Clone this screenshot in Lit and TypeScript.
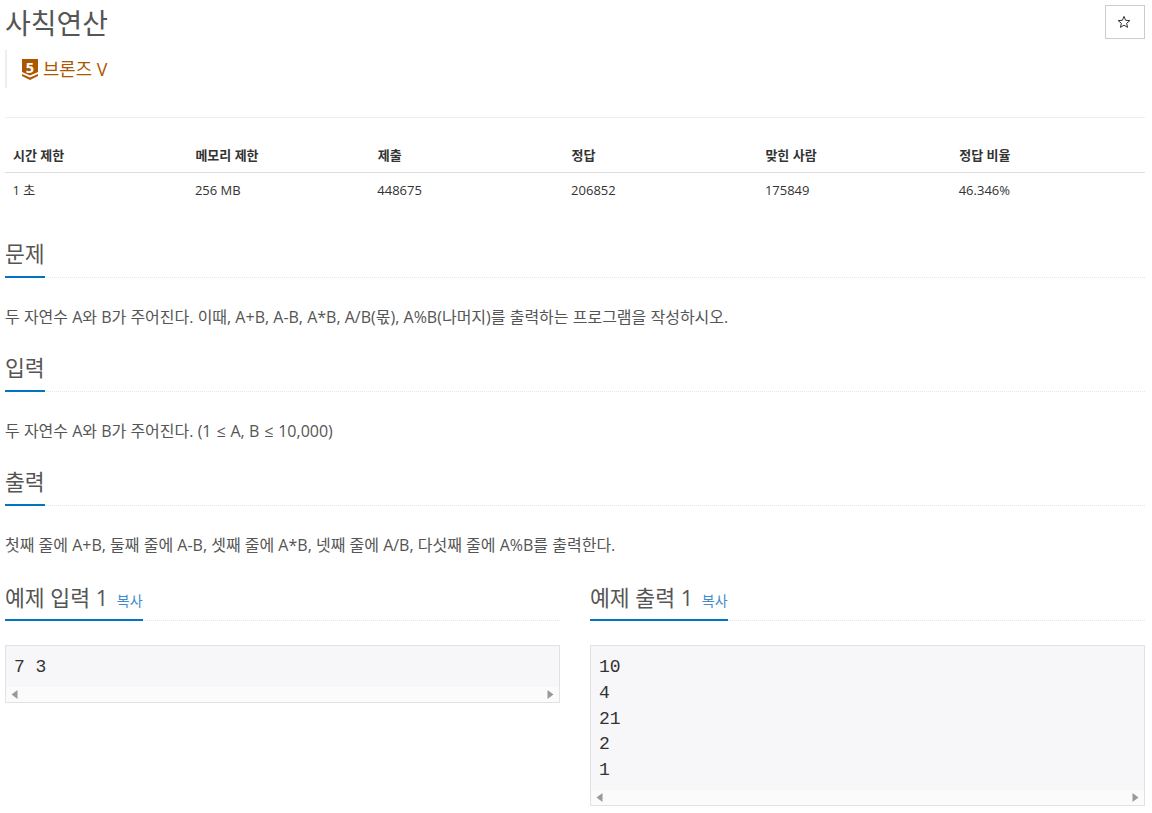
import { LitElement, html, css } from "lit";
import { customElement } from "lit/decorators.js";

const SANS = css`"Open Sans", "Noto Sans CJK KR", sans-serif`;

@customElement("app-root")
export class AppRoot extends LitElement {
  static styles = css`
    :host { display: block; height: 813px; overflow: hidden; background: #fff; color: #555; font-family: ${SANS}; font-size: 16px; line-height: 22.86px; box-sizing: border-box; padding: 0 7px 0 5px; }
    * { box-sizing: border-box; }
    .title-row { display: flex; justify-content: space-between; align-items: flex-start; height: 50px; }
    h1 { margin: 5px 0 0; font-size: 28px; line-height: 36px; font-weight: 400; color: #555; }
    .star { width: 40px; height: 34px; margin-top: 5px; border: 1px solid #ccc; background: #fff; display: flex; align-items: center; justify-content: center; padding-right: 2px; }
    .star svg { display: block; }
    .tier { height: 38px; border-left: 2px solid #eee; padding-left: 15px; display: flex; align-items: center; gap: 5px; color: #ad5600; font-size: 17.8px; line-height: 25px; }
    .badge { position: relative; width: 16px; height: 21px; }
    .badge svg { display: block; }
    .badge span { position: absolute; top: 0; left: 0; width: 16px; text-align: center; font-size: 14.5px; line-height: 17px; font-weight: 700; color: #fff; }
    .hr { height: 1px; background: #eee; margin-top: 29px; }
    .stats { display: grid; grid-template-columns: 182.4px 182.4px 193.8px 193.8px 193.8px 193.8px; margin-top: 19px; font-size: 13px; }
    .stats > div { padding: 0 8px; }
    .th { height: 36px; line-height: 37px; font-weight: 700; color: #333; border-bottom: 1px solid #ddd; }
    .stats > .td { height: 36px; line-height: 34px; color: #333; padding-left: 7.5px; }
    .headline { height: 40px; border-bottom: 1px dotted #e6e6e6; }
    .headline h2 { display: inline-block; height: 40px; margin: 0; font-size: 21.6px; line-height: 32px; font-weight: 400; color: #555; border-bottom: 2px solid #0076c0; }
    .samples .headline h2 { line-height: 33px; }
    .copy { font-size: 14px; color: #428bca; margin-left: 3.2px; }
    p { margin: 27.6px 0 0; font-size: 16px; line-height: 22.86px; color: #555; }
    .sym { margin: 0 0.75px; }
    .sec.first { margin-top: 29px; }
    .sec.next { margin-top: 23.5px; }
    .samples { display: grid; grid-template-columns: 555px 555px; column-gap: 30px; margin-top: 24.6px; align-items: start; }
    .pre { margin-top: 24px; border: 1px solid #e2e2e6; background: #f7f7f9; font-family: "Liberation Mono", monospace; font-size: 18px; line-height: 25.7px; color: #333; }
    .pre .code { padding: 9.2px 8px 6.2px; white-space: pre; }
    .bar { height: 15px; background: #fbfbfb; display: flex; justify-content: space-between; align-items: center; padding: 0 5px; }
    .bar svg { display: block; }
  `;

  private bar() {
    return html`<div class="bar">
      <svg width="7" height="9" viewBox="0 0 7 9"><path d="M6.5 0 0.5 4.5 6.5 9z" fill="#9a9a9a"/></svg>
      <svg width="7" height="9" viewBox="0 0 7 9"><path d="M0.5 0 6.5 4.5 0.5 9z" fill="#9a9a9a"/></svg>
    </div>`;
  }

  render() {
    return html`
      <div class="title-row">
        <h1>사칙연산</h1>
        <div class="star"><svg width="14" height="14" viewBox="0 0 14 14"><path d="M7 1.4 8.6 5.3 12.8 5.6 9.6 8.3 10.6 12.4 7 10.2 3.4 12.4 4.4 8.3 1.2 5.6 5.4 5.3z" fill="none" stroke="#333" stroke-width="1"/></svg></div>
      </div>
      <div class="tier">
        <div class="badge">
          <svg width="16" height="21" viewBox="0 0 16 21"><path d="M0 0H16V13L8 16.5 0 13z" fill="#ad5600"/><path d="M0 15 8 18.5 16 15V17L8 21 0 17z" fill="#ad5600"/></svg>
          <span>5</span>
        </div>
        <span>브론즈 V</span>
      </div>
      <div class="hr"></div>
      <div class="stats">
        <div class="th">시간 제한</div><div class="th">메모리 제한</div><div class="th">제출</div><div class="th">정답</div><div class="th">맞힌 사람</div><div class="th">정답 비율</div>
        <div class="td">1 초</div><div class="td">256 MB</div><div class="td">448675</div><div class="td">206852</div><div class="td">175849</div><div class="td">46.346%</div>
      </div>
      <div class="sec first"><div class="headline"><h2>문제</h2></div>
        <p>두 자연수 A와 B가 주어진다. 이때, A+B, A-B, A*B, A/B(몫), A%B(나머지)를 출력하는 프로그램을 작성하시오.</p></div>
      <div class="sec next"><div class="headline"><h2>입력</h2></div>
        <p>두 자연수 A와 B가 주어진다. (1 <span class="sym">≤</span> A, B <span class="sym">≤</span> 10,000)</p></div>
      <div class="sec next"><div class="headline"><h2>출력</h2></div>
        <p>첫째 줄에 A+B, 둘째 줄에 A-B, 셋째 줄에 A*B, 넷째 줄에 A/B, 다섯째 줄에 A%B를 출력한다.</p></div>
      <div class="samples">
        <div><div class="headline"><h2>예제 입력 1 <a class="copy">복사</a></h2></div>
          <div class="pre"><div class="code">7 3</div>${this.bar()}</div></div>
        <div><div class="headline"><h2>예제 출력 1 <a class="copy">복사</a></h2></div>
          <div class="pre"><div class="code">10
4
21
2
1</div>${this.bar()}</div></div>
      </div>
    `;
  }
}
